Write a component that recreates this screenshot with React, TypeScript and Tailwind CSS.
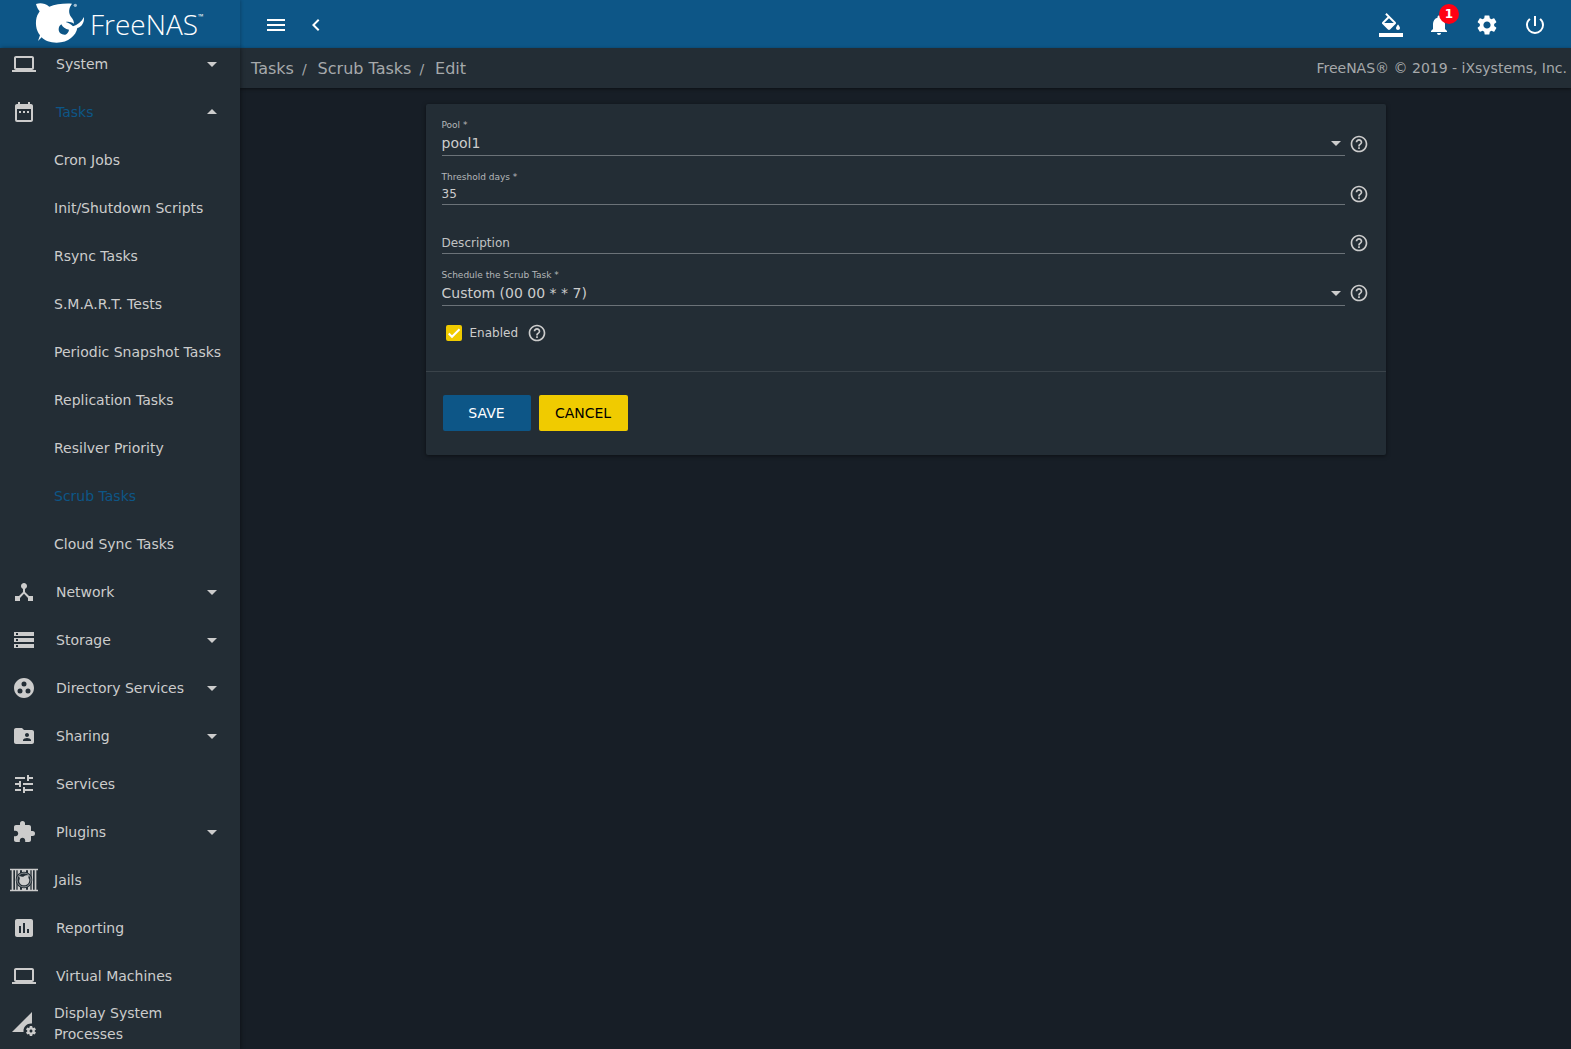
import { useState } from "react";
import type { ReactNode } from "react";
import type { IconType } from "react-icons";
import {
  MdArrowDropDown,
  MdArrowDropUp,
  MdAssessment,
  MdChevronLeft,
  MdDateRange,
  MdDeviceHub,
  MdExtension,
  MdFolderShared,
  MdGroupWork,
  MdHelpOutline,
  MdLaptop,
  MdMenu,
  MdNotifications,
  MdPermDataSetting,
  MdPowerSettingsNew,
  MdSettings,
  MdStorage,
  MdTune,
} from "react-icons/md";

/* =====================
   DRAWINGS
===================== */
function SharkLogo() {
  return (
    <svg viewBox="90 0 180 144" className="h-12 w-[60px] shrink-0" fill="white" aria-hidden="true">
      <path
        fillRule="evenodd"
        d="M108 12 C120 8 134 9 148 20 C166 12 190 10 216 11 C206 24 204 38 214 52 C219 58 222 64 222 71 C214 66 206 64 197 66 C206 69 214 73 219 79 C232 75 244 66 252 51 C253 68 246 80 232 84 C228 106 206 128 170 128 C150 128 134 122 125 112 L114 123 L120 106 C108 92 104 66 112 46 L119 34 C114 28 110 20 108 12 Z M176 88 C176 81 179 76 184 73 C188 82 196 87 207 89 C206 96 202 101 196 104 C185 105 176 99 176 88 Z"
      />
      <circle cx="226" cy="16" r="5" opacity="0.6" />
    </svg>
  );
}

function JailsIcon() {
  return (
    <svg viewBox="0 0 84 70" className="h-6 w-7" fill="#cccccc" aria-hidden="true">
      <path d="M0 1h84v5H0z M0 64h84v5H0z M5 6h5v58H5z M15 6h4v58h-4z M23 6h7v58h-7z M54 6h7v58h-7z M65 6h4v58h-4z M74 6h5v58h-5z M36 6h12v58h-12z" />
      <circle cx="42" cy="35" r="25" fill="#232d35" />
      <circle cx="42" cy="35" r="21" fill="none" stroke="#8d9296" strokeWidth="3" />
      <path d="M27 23 C34 25 38 26 40 25 C45 21 51 20 57 21 C54 27 55 30 58 34 C58 45 51 51 42 51 C33 51 26 44 28 35 C31 31 29 28 27 23 Z" />
    </svg>
  );
}

function FillIcon() {
  return (
    <svg viewBox="0 0 24 24" className="size-6" fill="currentColor" aria-hidden="true">
      <path d="M16.56 8.94L7.62 0 6.21 1.41l2.38 2.38-5.15 5.15c-.59.59-.59 1.54 0 2.12l5.5 5.5c.29.29.68.44 1.06.44s.77-.15 1.06-.44l5.5-5.5c.59-.58.59-1.53 0-2.12zM5.21 10L10 5.21 14.79 10H5.21zM19 11.5s-2 2.17-2 3.5c0 1.1.9 2 2 2s2-.9 2-2c0-1.33-2-3.5-2-3.5z" />
      <path d="M0 20h24v4H0z" />
    </svg>
  );
}

/* =====================
   NAVIGATION
===================== */
type NavEntry = {
  label: string;
  icon?: IconType;
  group?: boolean;
  children?: string[];
};

const NAV: NavEntry[] = [
  { label: "System", icon: MdLaptop, group: true },
  {
    label: "Tasks",
    icon: MdDateRange,
    group: true,
    children: [
      "Cron Jobs",
      "Init/Shutdown Scripts",
      "Rsync Tasks",
      "S.M.A.R.T. Tests",
      "Periodic Snapshot Tasks",
      "Replication Tasks",
      "Resilver Priority",
      "Scrub Tasks",
      "Cloud Sync Tasks",
    ],
  },
  { label: "Network", icon: MdDeviceHub, group: true },
  { label: "Storage", icon: MdStorage, group: true },
  { label: "Directory Services", icon: MdGroupWork, group: true },
  { label: "Sharing", icon: MdFolderShared, group: true },
  { label: "Services", icon: MdTune },
  { label: "Plugins", icon: MdExtension, group: true },
  { label: "Jails" },
  { label: "Reporting", icon: MdAssessment },
  { label: "Virtual Machines", icon: MdLaptop },
  { label: "Display System Processes", icon: MdPermDataSetting },
];

function NavRow({ entry }: { entry: NavEntry }) {
  const [open, setOpen] = useState(Boolean(entry.children));
  const Icon = entry.icon;

  if (entry.group) {
    return (
      <li>
        <button
          type="button"
          aria-expanded={open}
          onClick={() => setOpen(!open)}
          className={[
            "flex h-12 w-full items-center pl-3 pr-4 text-left",
            entry.children ? "text-[#0d5687]" : "",
          ].join(" ")}
        >
          {Icon && <Icon className="mr-5 size-6 shrink-0 text-[#cccccc]" />}
          <span className="flex-1 whitespace-nowrap">{entry.label}</span>
          {open ? (
            <MdArrowDropUp className="size-6 shrink-0 text-[#cccccc]" />
          ) : (
            <MdArrowDropDown className="size-6 shrink-0 text-[#cccccc]" />
          )}
        </button>
        {open && entry.children && (
          <ul>
            {entry.children.map((label) => (
              <li key={label}>
                <a
                  href="#"
                  className={[
                    "flex h-12 items-center whitespace-nowrap pl-[54px]",
                    label === "Scrub Tasks" ? "text-[#0d5687]" : "",
                  ].join(" ")}
                >
                  {label}
                </a>
              </li>
            ))}
          </ul>
        )}
      </li>
    );
  }

  const wide = entry.label === "Jails" || entry.label === "Display System Processes";

  return (
    <li>
      <a
        href="#"
        className={["flex h-12 items-center pr-12", wide ? "gap-4 pl-[10px]" : "gap-5 pl-3"].join(" ")}
      >
        <span className={["flex shrink-0 justify-center", wide ? "w-7" : "w-6"].join(" ")}>
          {Icon ? <Icon className="size-6" /> : <JailsIcon />}
        </span>
        <span className="leading-[21px]">{entry.label}</span>
      </a>
    </li>
  );
}

/* =====================
   FORM PARTS
===================== */
function Help({ className = "" }: { className?: string }) {
  return (
    <button type="button" aria-label="Help" className={className}>
      <MdHelpOutline className="size-5" />
    </button>
  );
}

function Field({
  id,
  label,
  helpClass,
  children,
}: {
  id: string;
  label: string;
  helpClass: string;
  children: ReactNode;
}) {
  return (
    <div className="flex items-end gap-1">
      <div className="flex-1 border-b border-[#6b7278]">
        <label htmlFor={id} className="block h-[11px] text-[9px] leading-[11px] text-[#b4b7b9]">
          {label}
        </label>
        {children}
      </div>
      <Help className={helpClass} />
    </div>
  );
}

function SelectBox({ id, value }: { id: string; value: string }) {
  return (
    <div className="relative">
      <select id={id} defaultValue={value} className="block h-6 w-full appearance-none bg-transparent text-sm outline-none">
        <option value={value}>{value}</option>
      </select>
      <MdArrowDropDown className="pointer-events-none absolute -right-[3px] top-0 size-6" />
    </div>
  );
}

export default function App() {
  return (
    <div className="flex h-screen flex-col overflow-hidden bg-[#171e26] font-['DejaVu_Sans',sans-serif] text-sm text-[#cccccc]">
      {/* TOPBAR */}
      <header className="flex h-12 shrink-0 bg-[#0d5687] text-white">
        <a href="#" className="flex w-60 shrink-0 pl-[30px] shadow-[1px_0_3px_rgba(0,0,0,0.2)]">
          <SharkLogo />
          <span className="whitespace-nowrap font-['Open_Sans',sans-serif] text-[28px] leading-[48px]">
            <span className="font-light">FreeNAS</span>
            <sup className="-top-4 text-[7px]">™</sup>
          </span>
        </a>
        <div className="flex flex-1 items-center pl-4 pr-3 pt-0.5">
          <button type="button" aria-label="Toggle menu" className="flex w-10 justify-center">
            <MdMenu className="size-6" />
          </button>
          <button type="button" aria-label="Collapse menu" className="flex w-10 justify-center">
            <MdChevronLeft className="size-6" />
          </button>
          <div className="flex-1" />
          <button type="button" aria-label="Theme" className="flex w-12 justify-center">
            <FillIcon />
          </button>
          <button type="button" aria-label="Notifications" className="relative flex w-12 justify-center">
            <MdNotifications className="size-6" />
            <span className="absolute -top-[9px] left-6 flex size-5 items-center justify-center rounded-full bg-[#ff0013] text-xs font-bold">
              1
            </span>
          </button>
          <button type="button" aria-label="Settings" className="flex w-12 justify-center">
            <MdSettings className="size-6" />
          </button>
          <button type="button" aria-label="Power" className="flex w-12 justify-center">
            <MdPowerSettingsNew className="size-6" />
          </button>
        </div>
      </header>

      <div className="flex min-h-0 flex-1">
        {/* SIDEBAR */}
        <nav className="z-10 w-60 shrink-0 overflow-hidden bg-[#232d35] shadow-[1px_0_4px_rgba(0,0,0,0.4)]">
          <ul className="-mt-2">
            {NAV.map((entry) => (
              <NavRow key={entry.label} entry={entry} />
            ))}
          </ul>
        </nav>

        <div className="flex min-w-0 flex-1 flex-col">
          {/* BREADCRUMB */}
          <div className="flex h-10 shrink-0 items-center justify-between bg-[#232d35] pl-[11px] pr-1 text-[#a6a9ab] shadow-[0_1px_3px_rgba(0,0,0,0.5)]">
            <nav aria-label="Breadcrumb" className="flex items-center pt-0.5 text-base">
              <a href="#">Tasks</a>
              <span className="px-2 text-sm">/</span>
              <a href="#" className="pl-[3px]">
                Scrub Tasks
              </a>
              <span className="px-2 text-sm">/</span>
              <span className="pl-[3px]">Edit</span>
            </nav>
            <span>FreeNAS® © 2019 - iXsystems, Inc.</span>
          </div>

          {/* FORM */}
          <main className="p-4">
            <form
              className="mx-auto max-w-[960px] rounded-xs bg-[#232d35] shadow-[0_1px_4px_rgba(0,0,0,0.5)]"
              onSubmit={(e) => e.preventDefault()}
            >
              <div className="flex flex-col gap-4 px-4 pb-[27px] pt-4">
                <Field id="pool" label="Pool *" helpClass="mb-0.5 w-[21px]">
                  <SelectBox id="pool" value="pool1" />
                </Field>
                <Field id="threshold" label="Threshold days *" helpClass="mb-px w-[21px]">
                  <input
                    id="threshold"
                    defaultValue="35"
                    className="block h-[21px] w-full bg-transparent text-xs outline-none"
                  />
                </Field>
                <Field id="description" label="" helpClass="mb-px w-[21px]">
                  <input
                    id="description"
                    aria-label="Description"
                    placeholder="Description"
                    className="block h-[21px] w-full bg-transparent text-xs outline-none placeholder:text-[#c0c2c3]"
                  />
                </Field>
                <Field id="schedule" label="Schedule the Scrub Task *" helpClass="mb-[3px] w-[21px]">
                  <SelectBox id="schedule" value="Custom (00 00 * * 7)" />
                </Field>
                <div className="flex h-[22px] items-center gap-2 pl-1 text-xs">
                  <span className="relative flex size-4">
                    <input
                      id="enabled"
                      type="checkbox"
                      defaultChecked
                      className="peer size-4 appearance-none rounded-xs border-2 border-[#cccccc] checked:border-[#f0cb00] checked:bg-[#f0cb00]"
                    />
                    <svg
                      viewBox="0 0 24 24"
                      className="pointer-events-none absolute inset-0 hidden size-4 peer-checked:block"
                      fill="none"
                      stroke="white"
                      strokeWidth="3"
                      aria-hidden="true"
                    >
                      <path d="M4.1 12.7L9 17.6 20.3 6.3" />
                    </svg>
                  </span>
                  <label htmlFor="enabled" className="pr-px">
                    Enabled
                  </label>
                  <Help />
                </div>
              </div>
              <div className="flex gap-2 border-t border-[#3a434a] pb-6 pl-[17px] pt-[23px]">
                <button type="submit" className="h-9 min-w-[88px] rounded-xs bg-[#0d5687] px-4 pb-px text-white">
                  SAVE
                </button>
                <button type="button" className="h-9 min-w-[89px] rounded-xs bg-[#f0cb00] px-4 pb-px text-black">
                  CANCEL
                </button>
              </div>
            </form>
          </main>
        </div>
      </div>
    </div>
  );
}
